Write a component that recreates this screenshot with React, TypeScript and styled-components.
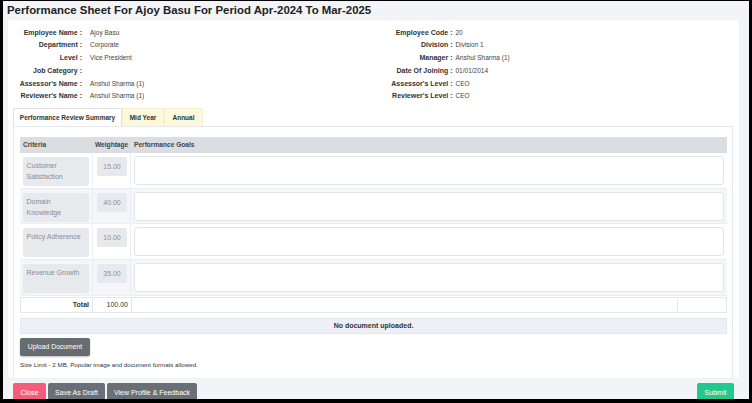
import styled, { createGlobalStyle } from 'styled-components';

const GlobalStyle = createGlobalStyle`
  html, body {
    margin: 0;
    padding: 0;
    background: #000;
  }
  * {
    box-sizing: border-box;
  }
`;

const Frame = styled.div`
  width: 752px;
  height: 403px;
  border-style: solid;
  border-color: #000;
  border-width: 1px 3px 4px 3px;
  background: #f3f4f8;
  overflow: hidden;
  font-family: 'Liberation Sans', Arial, sans-serif;
  color: #333;
`;

const Title = styled.h1`
  margin: 0;
  padding: 0 0 0 4px;
  height: 19px;
  line-height: 19px;
  font-size: 11.4px;
  font-weight: bold;
  color: #222;
`;

const Card = styled.div`
  margin: 0 10px 0 5px;
  height: 358px;
  background: #fff;
  border-radius: 3px;
  box-shadow: 0 0 2px rgba(0, 0, 0, 0.04);
  padding: 6.5px 6px 0 5px;
  display: flex;
  flex-direction: column;
`;

const InfoGrid = styled.div`
  display: flex;
  margin-left: -5px;
`;

const InfoColumn = styled.div`
  width: 365px;
  display: flex;
  flex-direction: column;
`;

const InfoRow = styled.div<{ $labelWidth: number; $gap: number }>`
  display: grid;
  grid-template-columns: ${(p) => p.$labelWidth}px 1fr;
  column-gap: ${(p) => p.$gap}px;
  height: 12.8px;
  line-height: 12.8px;
  font-size: 7px;
`;

const Label = styled.div`
  text-align: right;
  font-weight: bold;
  color: #333;
  white-space: nowrap;
`;

const Value = styled.div`
  color: #444;
  font-size: 6.5px;
  white-space: nowrap;
`;

const Tabs = styled.div`
  display: flex;
  margin-top: 4.7px;
  height: 18px;
`;

const Tab = styled.div<{ $active?: boolean; $width: number }>`
  width: ${(p) => p.$width}px;
  height: 18px;
  line-height: 17px;
  text-align: center;
  font-size: 6.5px;
  font-weight: bold;
  color: #333;
  white-space: nowrap;
  background: ${(p) => (p.$active ? '#fff' : '#fcfadb')};
  border: 1px solid ${(p) => (p.$active ? '#e2e3e8' : '#f4f1cf')};
  border-bottom: none;
`;

const Panel = styled.div`
  flex: 1;
  border: 1px solid #e8e9ee;
  border-bottom: none;
  padding: 10px 5px 0 6px;
  display: flex;
  flex-direction: column;
`;

const HeaderRow = styled.div`
  display: grid;
  grid-template-columns: 72px 39px 1fr;
  height: 16px;
  line-height: 16px;
  background: #dcdde2;
  font-size: 6.6px;
  font-weight: bold;
  color: #444;
`;

const HeadCell = styled.div`
  padding-left: 3px;
  white-space: nowrap;
`;

const GoalRow = styled.div<{ $striped: boolean }>`
  display: grid;
  grid-template-columns: 72px 39px 1fr;
  height: 35.75px;
  background: ${(p) => (p.$striped ? '#f4f6fa' : '#fff')};
  border-bottom: 1px solid #eceef3;
`;

const CriteriaCell = styled.div`
  padding: 4px 3px 0 3px;
`;

const CriteriaBox = styled.div`
  height: 29px;
  background: #e8e9ec;
  border-radius: 3px;
  padding: 3px 4px 0 3.5px;
  font-size: 7px;
  line-height: 11px;
  color: #8a8c90;
`;

const WeightCell = styled.div`
  padding: 4px 3px 0 4px;
  border-left: 1px solid #eceef3;
  border-right: 1px solid #eceef3;
`;

const WeightBox = styled.div`
  height: 19px;
  line-height: 19px;
  background: #e8e9ec;
  border-radius: 2px;
  text-align: center;
  font-size: 7px;
  color: #8e9094;
`;

const GoalCell = styled.div`
  padding: 3px 3px 0 3px;
`;

const GoalInput = styled.div`
  height: 29px;
  background: #fff;
  border: 1px solid #e2e4ea;
  border-radius: 3px;
`;

const TotalRow = styled.div`
  display: grid;
  grid-template-columns: 72px 39px 1fr 48px;
  height: 16px;
  margin-top: 1px;
  border: 1px solid #e6e7eb;
  font-size: 7px;
  line-height: 14px;
  color: #333;
  background: #fff;
`;

const TotalCell = styled.div<{ $bold?: boolean }>`
  text-align: right;
  padding-right: 3px;
  font-weight: ${(p) => (p.$bold ? 'bold' : 'normal')};
  border-right: 1px solid #e6e7eb;

  &:last-child {
    border-right: none;
  }
`;

const NoDocBar = styled.div`
  margin-top: 5px;
  height: 16px;
  line-height: 14px;
  background: #eef0f7;
  border: 1px solid #e3e6ee;
  text-align: center;
  font-size: 7px;
  font-weight: bold;
  color: #333;
`;

const UploadButton = styled.button`
  margin-top: 4px;
  width: 70px;
  height: 18px;
  padding: 0;
  border: none;
  border-radius: 2px;
  background: #676c71;
  color: #fff;
  font-family: inherit;
  font-size: 6.8px;
  box-shadow: 0 1px 2px rgba(0, 0, 0, 0.25);
  align-self: flex-start;
`;

const Hint = styled.div`
  margin-top: 4px;
  font-size: 6.2px;
  color: #333;
  line-height: 9px;
`;

const Footer = styled.div`
  display: flex;
  align-items: flex-start;
  margin: 5px 15px 0 10px;
  gap: 2px;
`;

const ActionButton = styled.button<{ $color: string; $width: number }>`
  width: ${(p) => p.$width}px;
  height: 18px;
  padding: 0;
  border: none;
  border-radius: 2px 2px 0 0;
  background: ${(p) => p.$color};
  color: #fff;
  font-family: inherit;
  font-size: 7px;
`;

const Spacer = styled.div`
  flex: 1;
`;

const leftInfo: [string, string][] = [
  ['Employee Name :', 'Ajoy Basu'],
  ['Department :', 'Corporate'],
  ['Level :', 'Vice President'],
  ['Job Category :', ''],
  ["Assessor's Name :", 'Anshul Sharma (1)'],
  ["Reviewer's Name :", 'Anshul Sharma (1)'],
];

const rightInfo: [string, string][] = [
  ['Employee Code :', '20'],
  ['Division :', 'Division 1'],
  ['Manager :', 'Anshul Sharma (1)'],
  ['Date Of Joining :', '01/01/2014'],
  ["Assessor's Level :", 'CEO'],
  ["Reviewer's Level :", 'CEO'],
];

const goals = [
  { criteria: 'Customer Satisfaction', weight: '15.00' },
  { criteria: 'Domain Knowledge', weight: '40.00' },
  { criteria: 'Policy Adherence', weight: '10.00' },
  { criteria: 'Revenue Growth', weight: '35.00' },
];

export default function App() {
  return (
    <>
      <GlobalStyle />
      <Frame>
        <Title>Performance Sheet For Ajoy Basu For Period Apr-2024 To Mar-2025</Title>
        <Card>
          <InfoGrid>
            <InfoColumn>
              {leftInfo.map(([label, value]) => (
                <InfoRow key={label} $labelWidth={74} $gap={8}>
                  <Label>{label}</Label>
                  <Value>{value}</Value>
                </InfoRow>
              ))}
            </InfoColumn>
            <InfoColumn>
              {rightInfo.map(([label, value]) => (
                <InfoRow key={label} $labelWidth={82} $gap={3}>
                  <Label>{label}</Label>
                  <Value>{value}</Value>
                </InfoRow>
              ))}
            </InfoColumn>
          </InfoGrid>

          <Tabs>
            <Tab $active $width={109}>Performance Review Summary</Tab>
            <Tab $width={42}>Mid Year</Tab>
            <Tab $width={39}>Annual</Tab>
          </Tabs>

          <Panel>
            <HeaderRow>
              <HeadCell>Criteria</HeadCell>
              <HeadCell>Weightage</HeadCell>
              <HeadCell>Performance Goals</HeadCell>
            </HeaderRow>
            {goals.map((g, i) => (
              <GoalRow key={g.criteria} $striped={i % 2 === 1}>
                <CriteriaCell>
                  <CriteriaBox>{g.criteria}</CriteriaBox>
                </CriteriaCell>
                <WeightCell>
                  <WeightBox>{g.weight}</WeightBox>
                </WeightCell>
                <GoalCell>
                  <GoalInput />
                </GoalCell>
              </GoalRow>
            ))}
            <TotalRow>
              <TotalCell $bold>Total</TotalCell>
              <TotalCell>100.00</TotalCell>
              <TotalCell />
              <TotalCell />
            </TotalRow>
            <NoDocBar>No document uploaded.</NoDocBar>
            <UploadButton>Upload Document</UploadButton>
            <Hint>Size Limit - 2 MB, Popular image and document formats allowed.</Hint>
          </Panel>
        </Card>

        <Footer>
          <ActionButton $color="#f45b7c" $width={33}>Close</ActionButton>
          <ActionButton $color="#6a6f75" $width={57}>Save As Draft</ActionButton>
          <ActionButton $color="#6a6f75" $width={90}>View Profile &amp; Feedback</ActionButton>
          <Spacer />
          <ActionButton $color="#22c98f" $width={37}>Submit</ActionButton>
        </Footer>
      </Frame>
    </>
  );
}
